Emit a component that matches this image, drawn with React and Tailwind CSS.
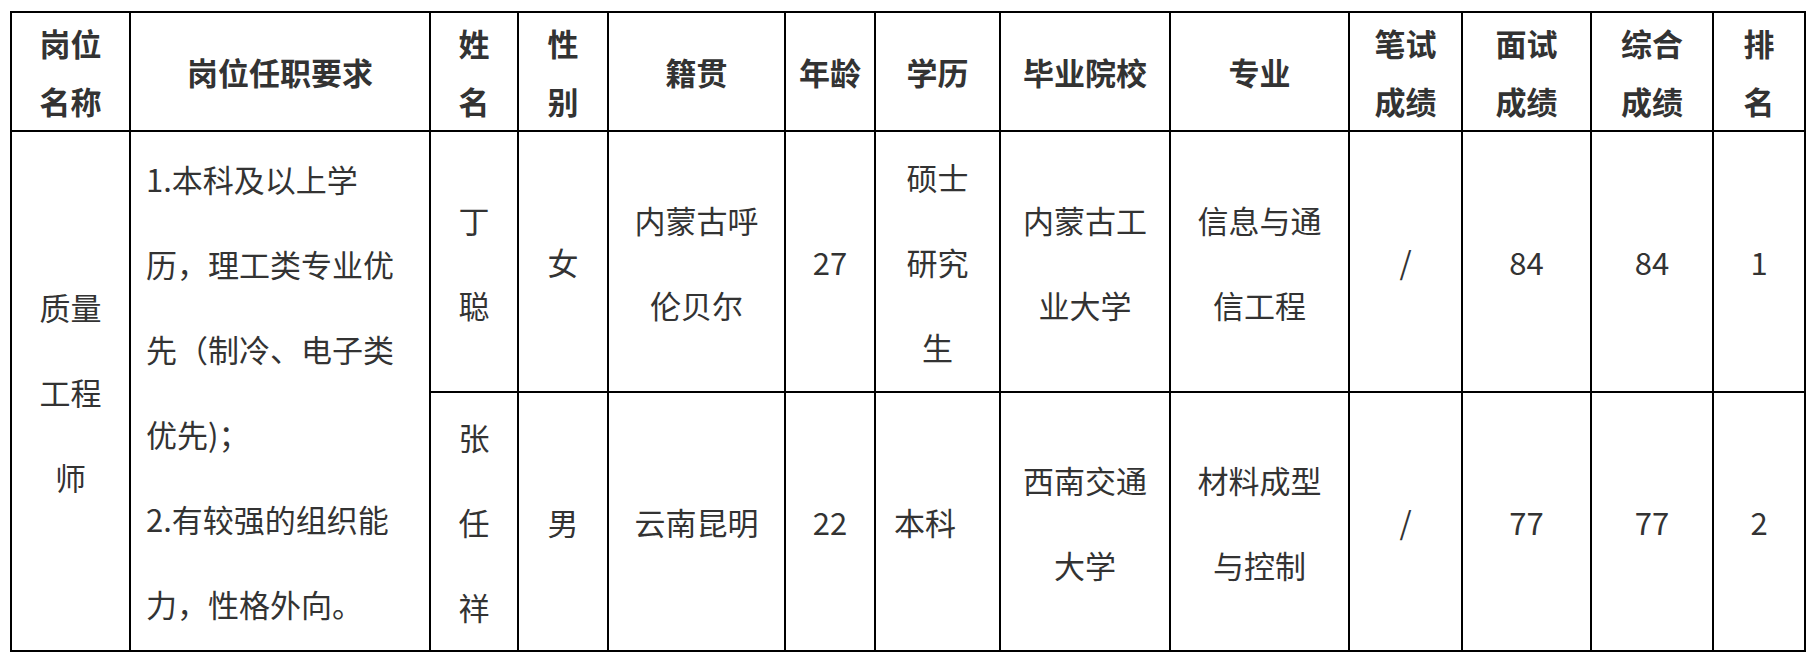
const HEAD = [
  ['岗位', '名称'],
  ['岗位任职要求'],
  ['姓', '名'],
  ['性', '别'],
  ['籍贯'],
  ['年龄'],
  ['学历'],
  ['毕业院校'],
  ['专业'],
  ['笔试', '成绩'],
  ['面试', '成绩'],
  ['综合', '成绩'],
  ['排', '名'],
]

const ROWS = [
  [['丁', '聪'], ['女'], ['内蒙古呼', '伦贝尔'], ['27'], ['硕士', '研究', '生'], ['内蒙古工', '业大学'], ['信息与通', '信工程'], ['/'], ['84'], ['84'], ['1']],
  [['张', '任', '祥'], ['男'], ['云南昆明'], ['22'], ['本科'], ['西南交通', '大学'], ['材料成型', '与控制'], ['/'], ['77'], ['77'], ['2']],
]

const REQUIREMENTS = ['1.本科及以上学', '历，理工类专业优', '先（制冷、电子类', '优先)；', '2.有较强的组织能', '力，性格外向。']

function Cell({ lines, className = '', lh = 'leading-[85px]' }) {
  return (
    <div className={`border-r-2 border-b-2 border-black flex flex-col justify-center ${lh} ${className}`}>
      {lines.map((l, i) => <div key={i}>{l}</div>)}
    </div>
  )
}

export default function App() {
  return (
    <div className="w-[1812px] h-[660px] bg-white pt-[11px] pl-[10px] font-['Noto_Sans_CJK_SC',sans-serif] text-[31px] text-[#333]">
      <div className="w-[1796px] border-l-2 border-t-2 border-black grid grid-cols-[119px_300px_88px_90px_177px_90px_125px_170px_179px_113px_129px_122px_92px] grid-rows-[119px_261px_259px]">
        {HEAD.map((h, i) => (
          <Cell key={i} lines={h} lh="leading-[58px]" className="font-bold text-center items-center" />
        ))}
        <Cell lines={['质量', '工程', '师']} className="row-span-2 text-center items-center" />
        <Cell lines={REQUIREMENTS} className="row-span-2 pl-[15px] items-start" />
        {ROWS.map((row, r) =>
          row.map((c, i) => (
            <Cell
              key={`${r}-${i}`}
              lines={c}
              className={r === 1 && i === 4 ? 'pl-[18px] items-start' : 'text-center items-center'}
            />
          ))
        )}
      </div>
    </div>
  )
}
